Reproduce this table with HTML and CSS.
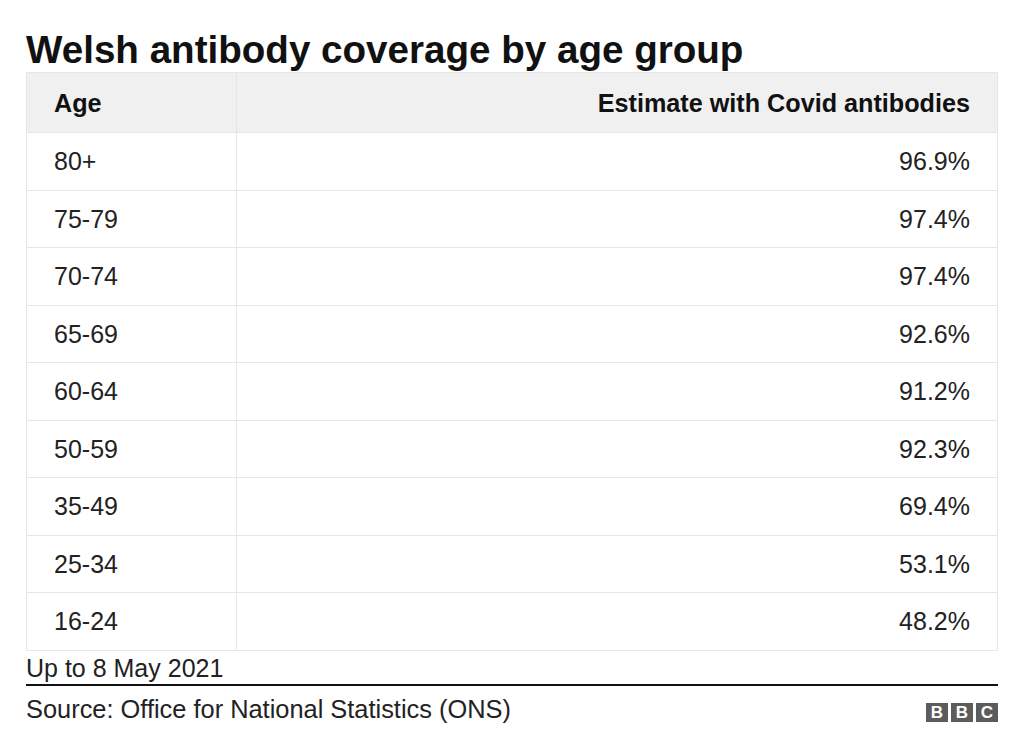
FILE: index.html
```html
<!DOCTYPE html>
<html lang="en">
<head>
<meta charset="utf-8">
<title>Welsh antibody coverage by age group</title>
<link rel="stylesheet" href="styles.css">
</head>
<body>
<div class="chart">
  <h1 class="title">Welsh antibody coverage by age group</h1>
  <table class="data">
    <thead>
      <tr><th class="c-age">Age</th><th class="c-val">Estimate with Covid antibodies</th></tr>
    </thead>
    <tbody>
      <tr><td class="c-age">80+</td><td class="c-val">96.9%</td></tr>
      <tr><td class="c-age">75-79</td><td class="c-val">97.4%</td></tr>
      <tr><td class="c-age">70-74</td><td class="c-val">97.4%</td></tr>
      <tr><td class="c-age">65-69</td><td class="c-val">92.6%</td></tr>
      <tr><td class="c-age">60-64</td><td class="c-val">91.2%</td></tr>
      <tr><td class="c-age">50-59</td><td class="c-val">92.3%</td></tr>
      <tr><td class="c-age">35-49</td><td class="c-val">69.4%</td></tr>
      <tr><td class="c-age">25-34</td><td class="c-val">53.1%</td></tr>
      <tr><td class="c-age">16-24</td><td class="c-val">48.2%</td></tr>
    </tbody>
  </table>
  <p class="note">Up to 8 May 2021</p>
  <div class="footer">
    <span class="source">Source: Office for National Statistics (ONS)</span>
    <span class="bbc"><span class="bbc-box">B</span><span class="bbc-box">B</span><span class="bbc-box">C</span></span>
  </div>
</div>
</body>
</html>
```
FILE: styles.css
```css
html, body {
  margin: 0;
  padding: 0;
  background: #fff;
}
body {
  font-family: "Liberation Sans", Arial, sans-serif;
  color: #222;
}
.chart {
  width: 972px;
  margin: 0 26px;
  padding-top: 28px;
}
.title {
  margin: 0;
  font-size: 38.6px;
  line-height: 44px;
  font-weight: bold;
  color: #111;
}
.data {
  width: 100%;
  border-collapse: collapse;
  font-size: 25px;
  table-layout: fixed;
}
.data th, .data td {
  border: 1px solid #e6e6e6;
  padding: 0 27px;
  line-height: 28px;
  vertical-align: middle;
}
.data th {
  background: #f0f0f0;
  font-weight: bold;
  font-size: 25.2px;
  height: 60px;
  box-sizing: border-box;
  color: #111;
}
.data td {
  height: 57.5px;
  box-sizing: border-box;
}
.c-age {
  width: 210px;
  text-align: left;
  box-sizing: border-box;
}
.c-val {
  text-align: right;
}
.note {
  margin: 3px 0 0;
  font-size: 25px;
  line-height: 28px;
}
.footer {
  margin-top: 2px;
  border-top: 2px solid #111;
  padding-top: 9px;
  display: flex;
  justify-content: space-between;
  align-items: flex-start;
  font-size: 25.4px;
  line-height: 28px;
}
.bbc {
  display: flex;
  gap: 3px;
  margin-top: 8px;
}
.bbc-box {
  width: 22px;
  height: 19px;
  background: #5c5c5c;
  color: #fff;
  font-weight: bold;
  font-size: 17px;
  line-height: 19px;
  text-align: center;
}
```
